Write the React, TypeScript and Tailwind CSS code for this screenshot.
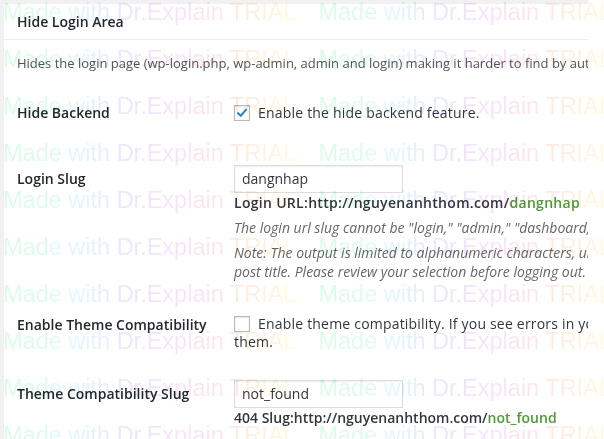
import React from "react";

const WM_ROWS = [0, 1, 2, 3, 4, 5, 6, 7, 8, 9];

function Watermark() {
  return (
    <div className="pointer-events-none absolute inset-0 overflow-hidden mix-blend-multiply">
      {WM_ROWS.map((r) => (
        <div key={r} className="flex h-[47px] whitespace-nowrap pl-[3px] text-[23.5px] leading-6 [font-family:'Liberation_Sans',Arial,sans-serif]">
          {[0, 1].map((c) => (
            <span
              key={c}
              className="mr-[22px] bg-[linear-gradient(90deg,#c6f8d2_0%,#cef6f4_20%,#d4e6ff_34%,#dfd4fb_46%,#f5d2f6_60%,#fcd4dc_72%,#fde2cc_84%,#fdfbcc_100%)] bg-clip-text text-transparent opacity-60"
            >
              Made with Dr.Explain TRIAL
            </span>
          ))}
        </div>
      ))}
    </div>
  );
}

function Checkbox({ checked }: { checked?: boolean }) {
  return (
    <span className="inline-flex h-4 w-4 shrink-0 items-center justify-center border border-[#b4b9be] bg-white align-[-3px] shadow-[inset_0_1px_2px_rgba(0,0,0,0.1)]">
      {checked && (
        <svg viewBox="0 0 16 16" className="h-[14px] w-[14px]">
          <path d="M3.5 8.2 L6.6 11.2 L12.6 4.2" fill="none" stroke="#1e8cbe" strokeWidth="2.4" strokeLinecap="round" strokeLinejoin="round" />
        </svg>
      )}
    </span>
  );
}

function TextBox({ value }: { value: string }) {
  return (
    <div className="h-[28px] w-[169px] border border-[#ddd] bg-white pl-[7px] text-[14px] leading-[26px] text-[#32373c] shadow-[inset_0_1px_2px_rgba(0,0,0,0.07)]">
      {value}
    </div>
  );
}

export default function App() {
  return (
    <div className="relative flex h-[439px] w-[604px] overflow-hidden bg-white [font-family:'Open_Sans',sans-serif]">
      <div className="h-full w-[588px] shrink-0 bg-[#f1f1f1] pl-1 pt-1">
        <div className="h-full w-[584px] overflow-hidden bg-white">
          {/* header */}
          <div className="h-[36px] border-b border-[#eeeeee] pl-[13px] text-[14px] font-semibold leading-[35px] text-[#23282d]">
            Hide Login Area
          </div>

          <p className="mt-[13px] whitespace-nowrap pl-[13px] text-[13px] leading-5 text-[#555]">
            Hides the login page (wp-login.php, wp-admin, admin and login) making it harder to find by automated attacks and making it easier for users unfamiliar with the WordPress platform.
          </p>

          {/* Hide Backend */}
          <div className="mt-[30px] flex pl-[13px]">
            <div className="w-[217px] shrink-0 text-[14px] font-semibold leading-5 text-[#23282d]">Hide Backend</div>
            <div className="flex items-center gap-2 whitespace-nowrap text-[14px] leading-5 tracking-[0.2px] text-[#32373c]">
              <Checkbox checked />
              <span>Enable the hide backend feature.</span>
            </div>
          </div>

          {/* Login Slug */}
          <div className="mt-[42px] flex pl-[13px]">
            <div className="w-[217px] shrink-0 text-[14px] font-semibold leading-[28px] text-[#23282d]">Login Slug</div>
            <div className="whitespace-nowrap">
              <TextBox value="dangnhap" />
              <div className="text-[14px] font-semibold leading-5 tracking-[0.3px] text-[#32373c]">
                Login URL:http://nguyenanhthom.com/<span className="text-[#4f9a3a]">dangnhap</span>
              </div>
              <p className="mt-[5px] text-[14px] italic leading-[19px] text-[#666]">
                The login url slug cannot be "login," "admin," "dashboard," or "wp-login.php" as these are use by default in WordPress.
              </p>
              <p className="mt-[6px] text-[14px] italic leading-[19px] text-[#666]">
                Note: The output is limited to alphanumeric characters, underscore (_) and dash (-). Special characters such as "." and "/" are not allowed and will be converted in the same manner as a
                <br />
                post title. Please review your selection before logging out.
              </p>
            </div>
          </div>

          {/* Enable Theme Compatibility */}
          <div className="mt-[33px] flex pl-[13px]">
            <div className="w-[217px] shrink-0 text-[14px] font-semibold leading-[22px] text-[#23282d]">Enable Theme Compatibility</div>
            <div className="whitespace-nowrap pt-[1px] text-[14px] leading-[18px] tracking-[0.2px] text-[#32373c]">
              <Checkbox />
              <span className="ml-2">
                Enable theme compatibility. If you see errors in your theme when using hide backend, in particular when going to wp-admin while not logged in, turn this on to fix
              </span>
              <br />
              them.
            </div>
          </div>

          {/* Theme Compatibility Slug */}
          <div className="mt-[29px] flex pl-[13px]">
            <div className="w-[217px] shrink-0 text-[14px] font-semibold leading-[28px] text-[#23282d]">Theme Compatibility Slug</div>
            <div className="whitespace-nowrap">
              <TextBox value="not_found" />
              <div className="text-[14px] font-semibold leading-5 text-[#32373c]">
                404 Slug:http://nguyenanhthom.com/<span className="text-[#4f9a3a]">not_found</span>
              </div>
            </div>
          </div>
        </div>
      </div>
      <Watermark />
    </div>
  );
}
